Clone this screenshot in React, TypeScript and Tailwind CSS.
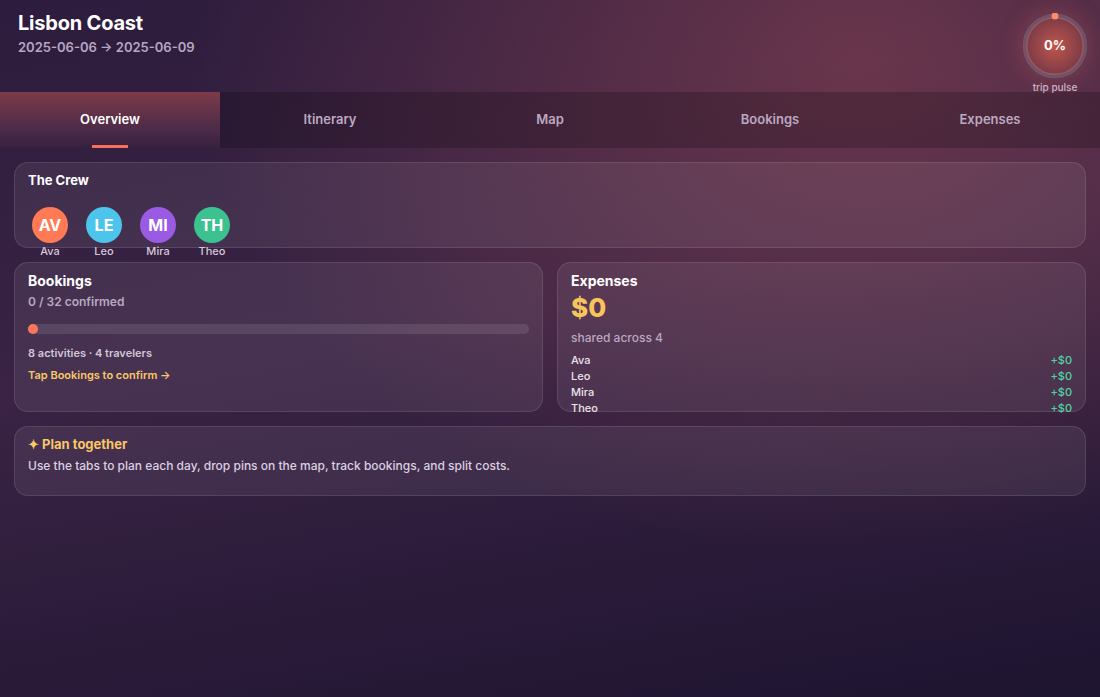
const crew = [
  { initials: "AV", name: "Ava", color: "bg-[#ff7a55]" },
  { initials: "LE", name: "Leo", color: "bg-[#4cc4ec]" },
  { initials: "MI", name: "Mira", color: "bg-[#9a5ae4]" },
  { initials: "TH", name: "Theo", color: "bg-[#3cc28f]" },
];

const tabs = ["Overview", "Itinerary", "Map", "Bookings", "Expenses"];

function Card({ className = "", children }: { className?: string; children: React.ReactNode }) {
  return (
    <div className={`rounded-[14px] border border-white/10 bg-white/[0.07] px-[13px] ${className}`}>{children}</div>
  );
}

function TripPulse() {
  return (
    <div className="flex flex-col items-center">
      <div className="relative h-[66px] w-[66px]">
        <div className="absolute inset-0 rounded-full shadow-[0_0_24px_rgba(255,120,90,0.25)]" />
        <svg width="66" height="66" viewBox="0 0 66 66" className="absolute inset-0">
          <defs>
            <radialGradient id="pulseFill" cx="50%" cy="50%" r="50%">
              <stop offset="0%" stopColor="#c0564a" />
              <stop offset="100%" stopColor="#7c3b47" />
            </radialGradient>
          </defs>
          <circle cx="33" cy="33" r="29" fill="url(#pulseFill)" />
          <circle cx="33" cy="33" r="30" fill="none" stroke="rgba(255,255,255,0.16)" strokeWidth="5" />
          <circle cx="33" cy="3" r="3.5" fill="#ff8a66" />
        </svg>
        <span className="absolute inset-0 flex items-center justify-center text-[13px] font-bold text-white">0%</span>
      </div>
      <span className="mt-[3px] text-[10px] font-medium leading-none text-[#c9b8c9]">trip pulse</span>
    </div>
  );
}

export default function App() {
  return (
    <div
      className="min-h-[697px] w-full font-['Inter',sans-serif] text-white bg-[radial-gradient(ellipse_at_78%_8%,rgba(170,80,90,0.45),transparent_55%),linear-gradient(170deg,#2d1c3d_0%,#3a2344_45%,#1d1430_100%)]"
    >
      <header className="flex h-[92px] items-start justify-between pl-[18px] pr-[12px]">
        <div className="pt-[11px]">
          <h1 className="text-[20px] font-bold leading-[24px] tracking-[-0.2px]">Lisbon Coast</h1>
          <p className="mt-[4px] text-[13px] font-semibold leading-[16px] text-[#b7a6c2]">2025-06-06 → 2025-06-09</p>
        </div>
        <div className="pt-[13px]">
          <TripPulse />
        </div>
      </header>

      <nav className="grid h-[56px] grid-cols-5 bg-black/20">
        {tabs.map((t, i) => (
          <div
            key={t}
            className={`relative flex items-center justify-center text-[13px] font-semibold ${
              i === 0 ? "bg-[linear-gradient(180deg,#7c3b48_0%,#4a2a48_70%,#37203f_100%)] text-white" : "text-[#bba9c0]"
            }`}
          >
            {t}
            {i === 0 && <span className="absolute bottom-0 h-[3px] w-[36px] bg-[#f8705e]" />}
          </div>
        ))}
      </nav>

      <main className="flex flex-col gap-[14px] p-[14px]">
        <Card className="h-[86px] pt-[9px]">
          <h2 className="text-[13px] font-bold leading-[16px]">The Crew</h2>
          <div className="mt-[19px] flex gap-[18px] pl-[4px]">
            {crew.map((c) => (
              <div key={c.name} className="flex w-[36px] flex-col items-center">
                <div className={`flex h-[36px] w-[36px] items-center justify-center rounded-full text-[16px] font-bold ${c.color}`}>
                  {c.initials}
                </div>
                <span className="mt-[2px] text-[11px] font-medium leading-[13px] text-[#d6c8d8]">{c.name}</span>
              </div>
            ))}
          </div>
        </Card>

        <div className="grid grid-cols-2 gap-[14px]">
          <Card className="h-[150px] pt-[9px]">
            <h2 className="text-[14px] font-bold leading-[18px]">Bookings</h2>
            <p className="mt-[4px] text-[12px] font-semibold leading-[16px] text-[#b9a8c0]">0 / 32 confirmed</p>
            <div className="relative mt-[14px] h-[10px] rounded-full bg-white/10">
              <span className="absolute left-0 top-0 h-[10px] w-[10px] rounded-full bg-[#ff7559]" />
            </div>
            <p className="mt-[12px] text-[11px] font-semibold leading-[14px] text-[#d3c6d6]">8 activities · 4 travelers</p>
            <p className="mt-[8px] text-[11px] font-semibold leading-[14px] text-[#f8c766]">Tap Bookings to confirm →</p>
          </Card>

          <Card className="h-[150px] pt-[9px]">
            <h2 className="text-[14px] font-bold leading-[18px]">Expenses</h2>
            <p className="mt-[2px] text-[26px] font-extrabold leading-[32px] text-[#f8c45c]">$0</p>
            <p className="mt-[6px] text-[12px] font-medium leading-[16px] text-[#b9a8c0]">shared across 4</p>
            <ul className="mt-[6px]">
              {crew.map((c) => (
                <li key={c.name} className="flex justify-between text-[11px] font-medium leading-[16px]">
                  <span className="text-[#ece2ee]">{c.name}</span>
                  <span className="text-[#4fd3a3]">+$0</span>
                </li>
              ))}
            </ul>
          </Card>
        </div>

        <Card className="h-[70px] pt-[9px]">
          <h2 className="text-[13px] font-bold leading-[16px] text-[#f8c766]">✦ Plan together</h2>
          <p className="mt-[6px] text-[12px] font-medium leading-[16px] text-[#dccfe0]">
            Use the tabs to plan each day, drop pins on the map, track bookings, and split costs.
          </p>
        </Card>
      </main>
    </div>
  );
}
